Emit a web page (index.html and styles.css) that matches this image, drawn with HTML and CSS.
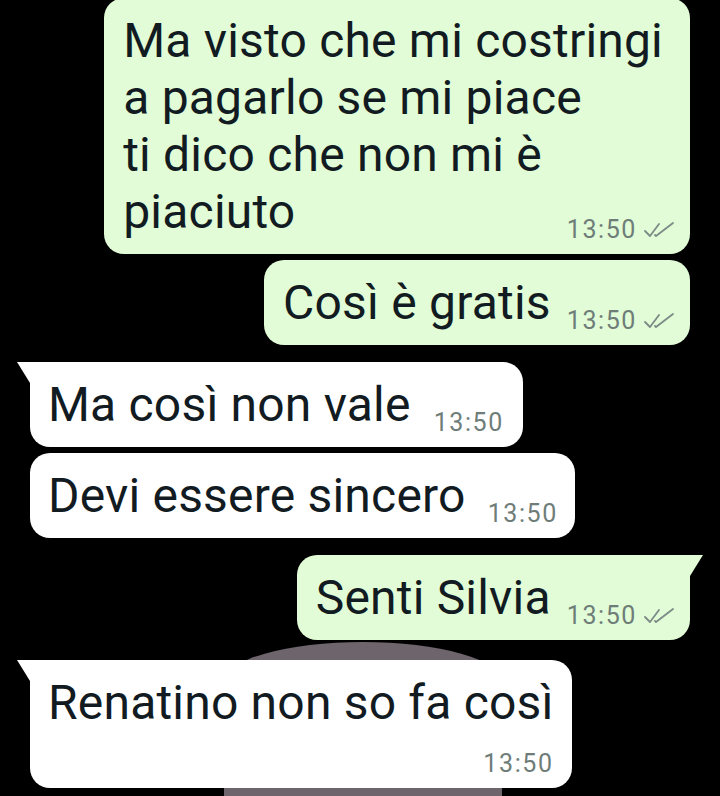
FILE: index.html
```html
<!DOCTYPE html>
<html lang="it">
<head>
<meta charset="utf-8">
<title>Chat</title>
<link rel="stylesheet" href="styles.css">
</head>
<body>
<div class="chat">
  <div class="wallpaper-shape"></div>

  <div class="msg out first">
    <div class="bubble stack">
      <p class="text">Ma visto che mi costringi<br>a pagarlo se mi piace<br>ti dico che non mi è<br>piaciuto</p>
      <span class="meta">13:50<svg class="ticks" viewBox="0 0 32 16" width="32" height="16"><path d="M1 9 L6 14 L15 2"/><path d="M11 13 L12 14 L29 1"/></svg></span>
    </div>
  </div>

  <div class="msg out">
    <div class="bubble">
      <p class="text">Così è gratis</p>
      <span class="meta">13:50<svg class="ticks" viewBox="0 0 32 16" width="32" height="16"><path d="M1 9 L6 14 L15 2"/><path d="M11 13 L12 14 L29 1"/></svg></span>
    </div>
  </div>

  <div class="msg in group-start">
    <div class="bubble tail">
      <p class="text">Ma così non vale</p>
      <span class="meta">13:50</span>
    </div>
  </div>

  <div class="msg in near">
    <div class="bubble narrow">
      <p class="text">Devi essere sincero</p>
      <span class="meta">13:50</span>
    </div>
  </div>

  <div class="msg out group-start">
    <div class="bubble tail">
      <p class="text">Senti Silvia</p>
      <span class="meta">13:50<svg class="ticks" viewBox="0 0 32 16" width="32" height="16"><path d="M1 9 L6 14 L15 2"/><path d="M11 13 L12 14 L29 1"/></svg></span>
    </div>
  </div>

  <div class="msg in group-start last-group">
    <div class="bubble tail column">
      <p class="text">Renatino non so fa così</p>
      <span class="meta">13:50</span>
    </div>
  </div>
</div>
</body>
</html>
```

FILE: styles.css
```css
html, body {
  margin: 0;
  padding: 0;
  background: #000;
  height: 100%;
  overflow: hidden;
}

body {
  font-family: Roboto, "Noto Sans", sans-serif;
}

.chat {
  position: relative;
  display: flex;
  flex-direction: column;
  padding: 0 30px;
  margin-top: -2px;
}

.wallpaper-shape {
  position: absolute;
  left: 224px;
  top: 644px;
  width: 278px;
  height: 200px;
  background: #6d646c;
  border-radius: 140px 140px 0 0 / 40px 40px 0 0;
}

.msg {
  position: relative;
  display: flex;
  margin-top: 6px;
}

.msg.first {
  margin-top: 0;
}

.msg.near {
  margin-top: 6px;
}

.msg.group-start {
  margin-top: 17px;
}

.msg.last-group {
  margin-top: 20px;
}

.msg.out {
  justify-content: flex-end;
}

.bubble {
  position: relative;
  display: flex;
  align-items: flex-end;
  border-radius: 20px;
  padding: 14px 14px 14px 19px;
}

.out .bubble {
  background: #e1fcd6;
}

.in .bubble {
  background: #fff;
  padding-left: 18px;
  padding-right: 19px;
}

.in .bubble.narrow {
  padding-right: 17px;
}

.text {
  margin: 0;
  font-size: 48px;
  line-height: 57px;
  letter-spacing: 0.2px;
  color: #111b21;
  white-space: nowrap;
}

.meta {
  display: flex;
  align-items: center;
  gap: 7px;
  font-size: 25px;
  line-height: 24px;
  letter-spacing: 1.6px;
  color: #6f7d79;
  margin-left: 16px;
  margin-bottom: -2px;
}

.in .meta {
  margin-left: 23px;
}

.in .narrow .meta {
  margin-left: 22px;
}

.ticks {
  fill: none;
  stroke: #7d8b87;
  stroke-width: 1.8;
  stroke-linecap: round;
  stroke-linejoin: round;
}

.bubble.stack {
  display: grid;
  padding-right: 27px;
}

.bubble.stack > * {
  grid-area: 1 / 1;
}

.bubble.stack .meta {
  justify-self: end;
  align-self: end;
  margin-right: -13px;
}

.bubble.column {
  flex-direction: column;
  align-items: stretch;
  padding-right: 18px;
}

.bubble.column .meta {
  align-self: flex-end;
  margin-top: 21px;
  margin-left: 0;
}

.in .bubble.tail {
  border-top-left-radius: 0;
}

.in .bubble.tail::before {
  content: "";
  position: absolute;
  left: -13px;
  top: 0;
  width: 13px;
  height: 21px;
  background: #fff;
  clip-path: polygon(0 0, 100% 0, 100% 100%);
}

.out .bubble.tail {
  border-top-right-radius: 0;
}

.out .bubble.tail::before {
  content: "";
  position: absolute;
  right: -13px;
  top: 0;
  width: 13px;
  height: 21px;
  background: #e1fcd6;
  clip-path: polygon(0 0, 100% 0, 0 100%);
}
```
